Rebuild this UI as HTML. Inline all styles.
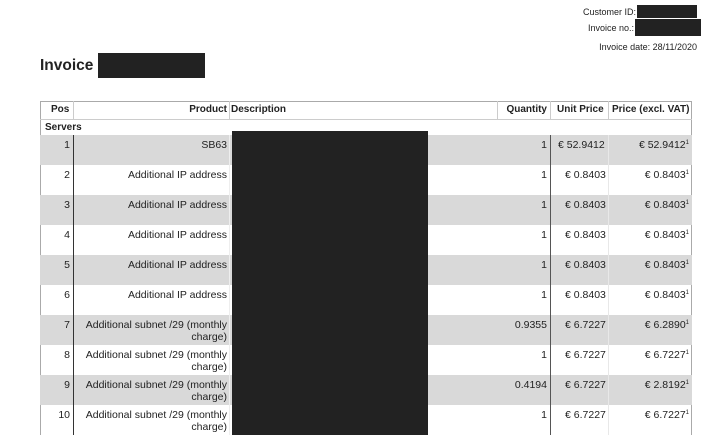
<!DOCTYPE html>
<html><head><style>
body{margin:0;width:713px;height:435px;overflow:hidden;background:#fff;font-family:"Liberation Sans",sans-serif;color:#222;position:relative}
.a{position:absolute;font-size:10.5px;line-height:12px;white-space:nowrap}
.h{font-size:10px;font-weight:bold}
.blk{position:absolute;background:#222}
.r{text-align:right}
.row{position:absolute;left:40px;width:652px;height:30px}
.g{background:#d9d9d9}
.vl{position:absolute;width:1px}
sup{font-size:6px;vertical-align:4px;line-height:0}
</style></head><body>
<div class="a r" style="right:77px;top:6px;font-size:9px">Customer ID:</div>
<div class="blk" style="left:637px;top:5px;width:60px;height:13px"></div>
<div class="a r" style="right:79px;top:22px;font-size:9px">Invoice no.:</div>
<div class="blk" style="left:635px;top:19px;width:66px;height:17px"></div>
<div class="a r" style="right:16px;top:41px;font-size:9px">Invoice date: 28/11/2020</div>
<div class="a" style="left:40px;top:57px;font-size:15.5px;line-height:18px;font-weight:bold">Invoice</div>
<div class="blk" style="left:98px;top:53px;width:107px;height:25px"></div>

<div style="position:absolute;left:40px;top:101px;width:652px;height:334px;border-left:1px solid #aaa;border-right:1px solid #aaa;border-top:1px solid #aaa;box-sizing:border-box"></div>
<div style="position:absolute;left:40px;top:119px;width:652px;height:1px;background:#ccc"></div>
<div class="a h" style="left:51px;top:104px">Pos</div>
<div class="a r h" style="right:486px;top:104px">Product</div>
<div class="a h" style="left:231px;top:104px">Description</div>
<div class="a r h" style="right:166px;top:104px">Quantity</div>
<div class="a h" style="left:557px;top:104px">Unit Price</div>
<div class="a h" style="left:612px;top:104px">Price (excl. VAT)</div>
<div class="vl" style="left:73px;top:101px;height:18px;background:#ccc"></div>
<div class="vl" style="left:229px;top:101px;height:18px;background:#ccc"></div>
<div class="vl" style="left:497px;top:101px;height:18px;background:#ccc"></div>
<div class="vl" style="left:550px;top:101px;height:18px;background:#ccc"></div>
<div class="vl" style="left:608px;top:101px;height:18px;background:#ccc"></div>
<div class="a h" style="left:45px;top:122px">Servers</div>

<div class="row g" style="top:135px"></div>
<div class="row g" style="top:195px"></div>
<div class="row g" style="top:255px"></div>
<div class="row g" style="top:315px"></div>
<div class="row g" style="top:375px"></div>
<div class="vl" style="left:73px;top:135px;height:300px;background:#333"></div>
<div class="vl" style="left:550px;top:135px;height:300px;background:#555"></div>
<div class="vl" style="left:608px;top:135px;height:300px;background:#e8e8e8"></div>
<div class="vl" style="left:229px;top:135px;height:300px;background:#eee"></div>

<div class="a r" style="right:643px;top:139px">1</div><div class="a r" style="right:486px;top:139px">SB63</div><div class="a r" style="right:166px;top:139px">1</div><div class="a" style="left:558px;top:139px">€ 52.9412</div><div class="a r" style="right:24px;top:139px">€ 52.9412<sup>1</sup></div>
<div class="a r" style="right:643px;top:169px">2</div><div class="a r" style="right:486px;top:169px">Additional IP address</div><div class="a r" style="right:166px;top:169px">1</div><div class="a" style="left:565px;top:169px">€ 0.8403</div><div class="a r" style="right:24px;top:169px">€ 0.8403<sup>1</sup></div>
<div class="a r" style="right:643px;top:199px">3</div><div class="a r" style="right:486px;top:199px">Additional IP address</div><div class="a r" style="right:166px;top:199px">1</div><div class="a" style="left:565px;top:199px">€ 0.8403</div><div class="a r" style="right:24px;top:199px">€ 0.8403<sup>1</sup></div>
<div class="a r" style="right:643px;top:229px">4</div><div class="a r" style="right:486px;top:229px">Additional IP address</div><div class="a r" style="right:166px;top:229px">1</div><div class="a" style="left:565px;top:229px">€ 0.8403</div><div class="a r" style="right:24px;top:229px">€ 0.8403<sup>1</sup></div>
<div class="a r" style="right:643px;top:259px">5</div><div class="a r" style="right:486px;top:259px">Additional IP address</div><div class="a r" style="right:166px;top:259px">1</div><div class="a" style="left:565px;top:259px">€ 0.8403</div><div class="a r" style="right:24px;top:259px">€ 0.8403<sup>1</sup></div>
<div class="a r" style="right:643px;top:289px">6</div><div class="a r" style="right:486px;top:289px">Additional IP address</div><div class="a r" style="right:166px;top:289px">1</div><div class="a" style="left:565px;top:289px">€ 0.8403</div><div class="a r" style="right:24px;top:289px">€ 0.8403<sup>1</sup></div>
<div class="a r" style="right:643px;top:319px">7</div><div class="a r" style="right:486px;top:319px">Additional subnet /29 (monthly<br>charge)</div><div class="a r" style="right:166px;top:319px">0.9355</div><div class="a" style="left:565px;top:319px">€ 6.7227</div><div class="a r" style="right:24px;top:319px">€ 6.2890<sup>1</sup></div>
<div class="a r" style="right:643px;top:349px">8</div><div class="a r" style="right:486px;top:349px">Additional subnet /29 (monthly<br>charge)</div><div class="a r" style="right:166px;top:349px">1</div><div class="a" style="left:565px;top:349px">€ 6.7227</div><div class="a r" style="right:24px;top:349px">€ 6.7227<sup>1</sup></div>
<div class="a r" style="right:643px;top:379px">9</div><div class="a r" style="right:486px;top:379px">Additional subnet /29 (monthly<br>charge)</div><div class="a r" style="right:166px;top:379px">0.4194</div><div class="a" style="left:565px;top:379px">€ 6.7227</div><div class="a r" style="right:24px;top:379px">€ 2.8192<sup>1</sup></div>
<div class="a r" style="right:643px;top:409px">10</div><div class="a r" style="right:486px;top:409px">Additional subnet /29 (monthly<br>charge)</div><div class="a r" style="right:166px;top:409px">1</div><div class="a" style="left:565px;top:409px">€ 6.7227</div><div class="a r" style="right:24px;top:409px">€ 6.7227<sup>1</sup></div>
<div class="blk" style="left:232px;top:131px;width:196px;height:304px"></div>
</body></html>
